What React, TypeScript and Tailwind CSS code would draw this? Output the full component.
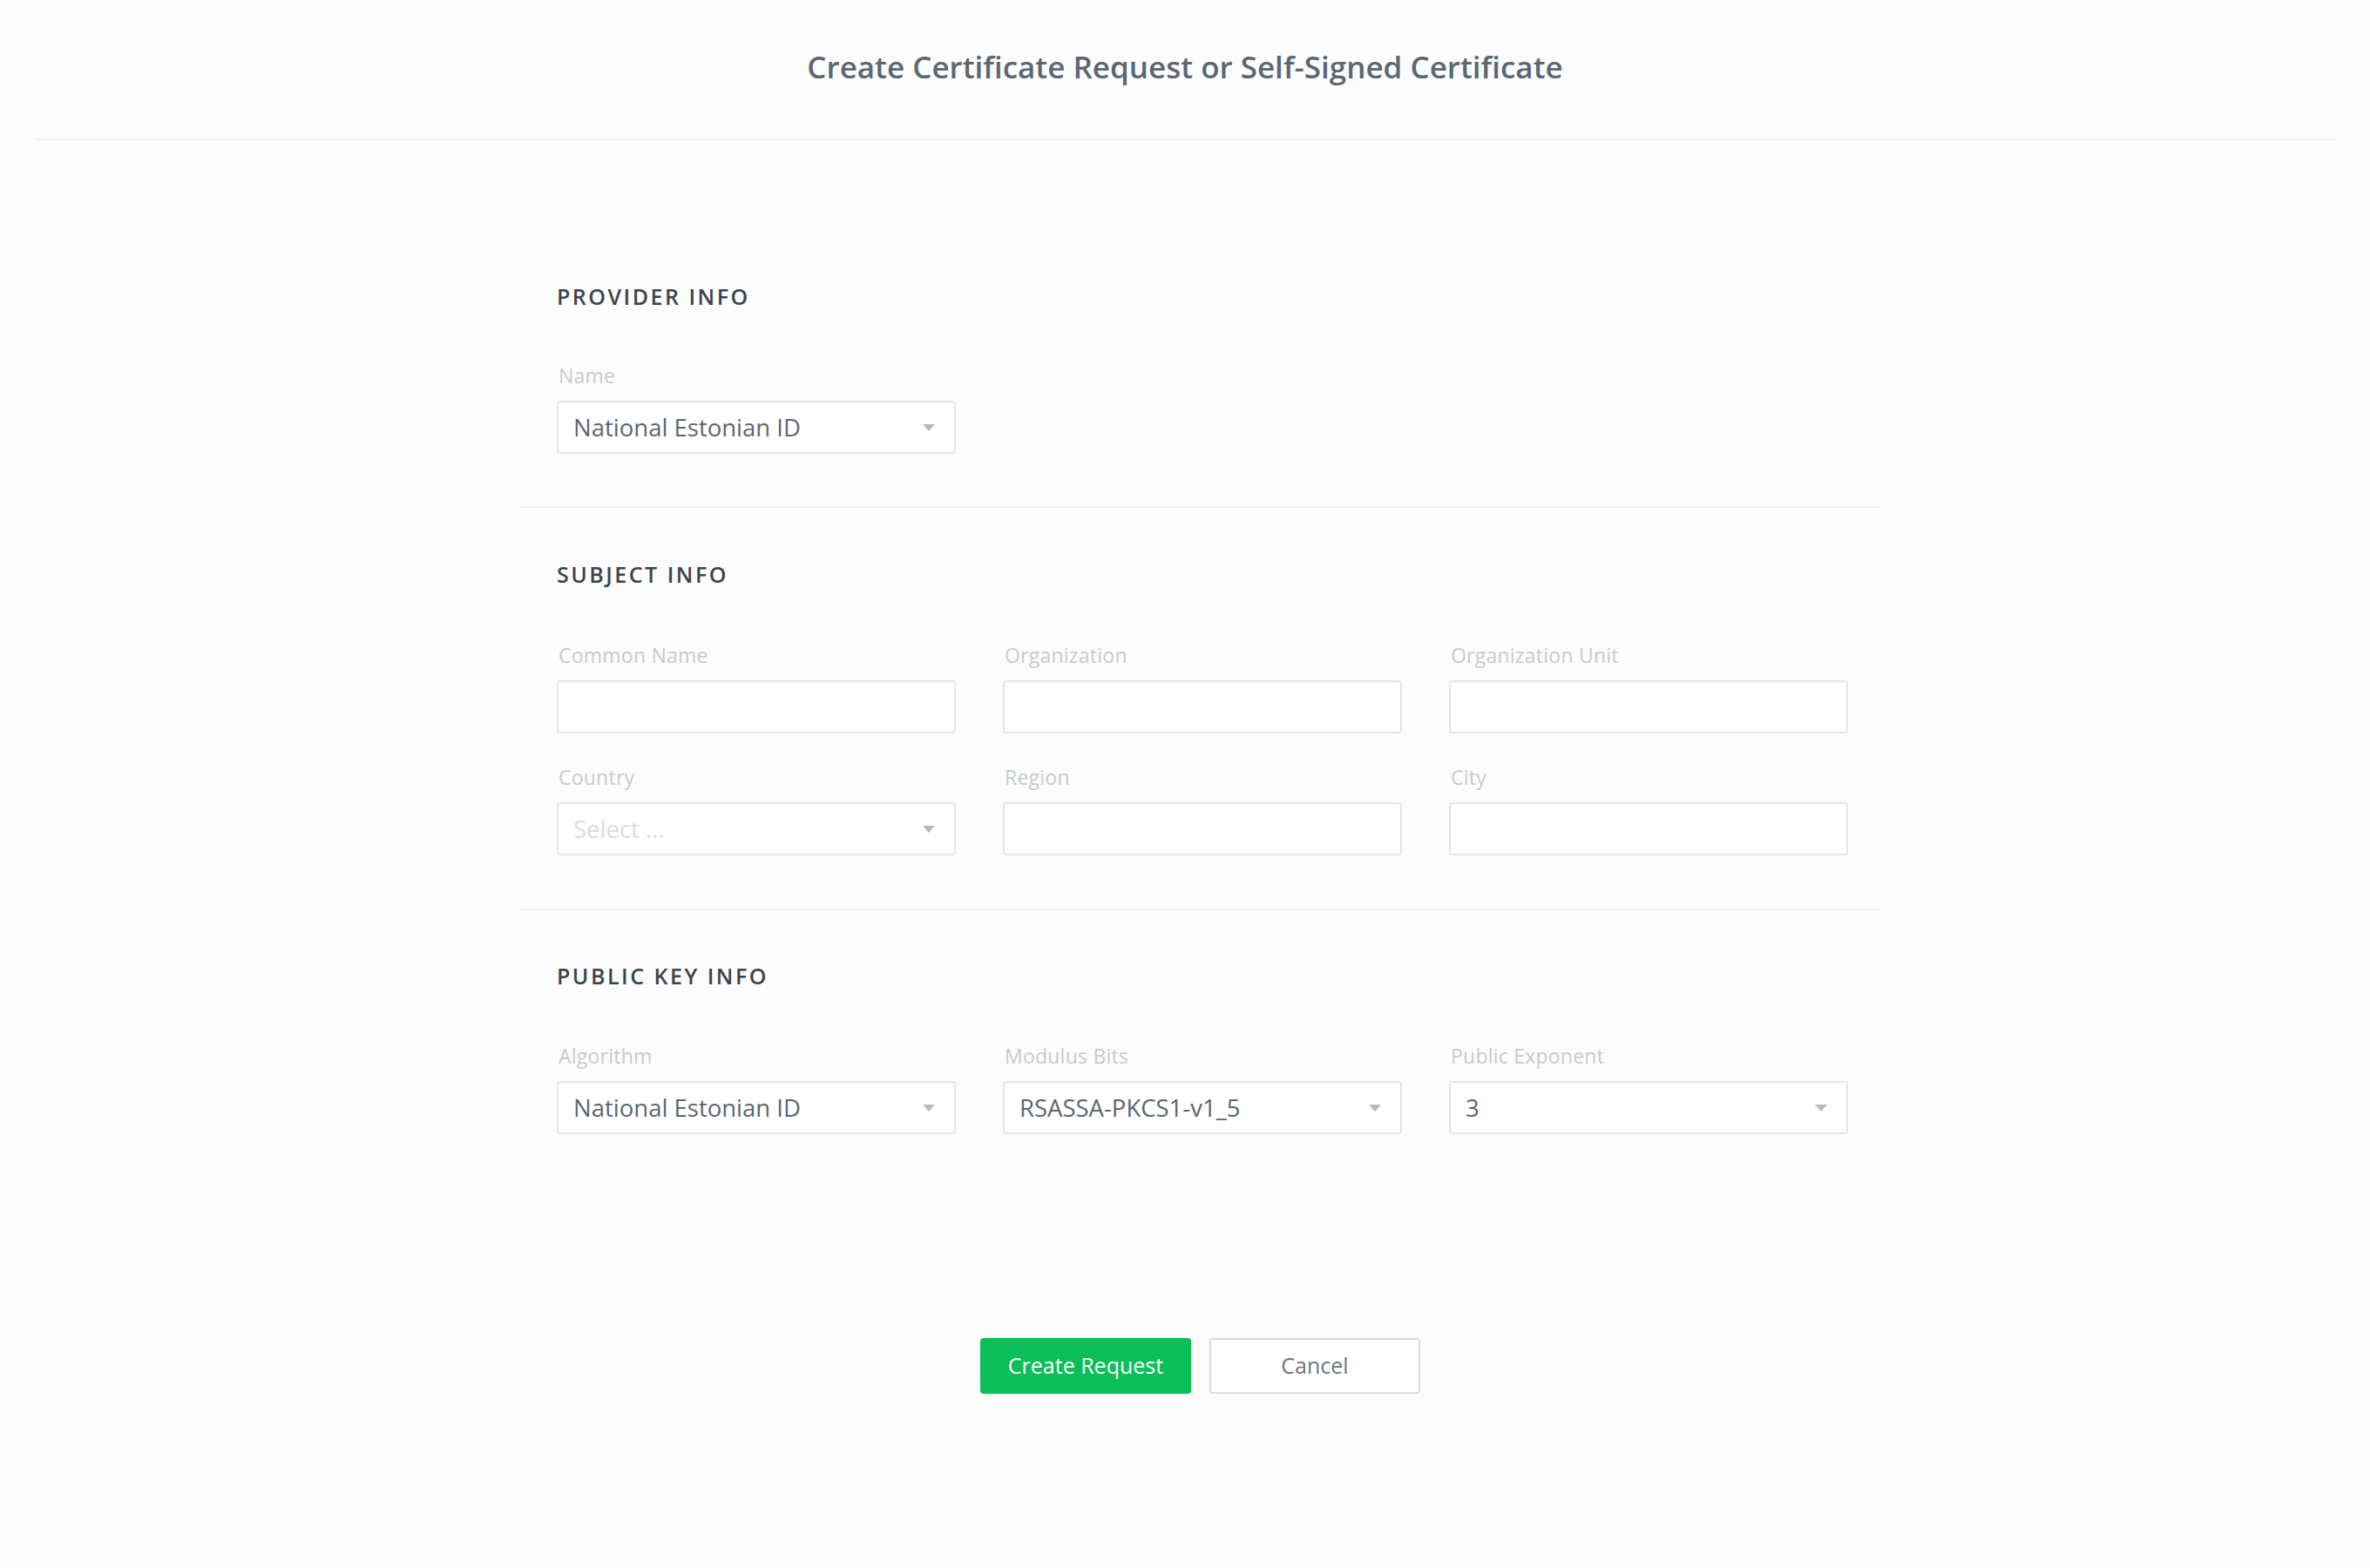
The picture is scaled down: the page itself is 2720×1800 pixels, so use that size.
function Caret() {
  return (
    <svg width="14" height="8" viewBox="0 0 14 8" className="shrink-0">
      <path d="M0 0H14L7 8Z" fill="#b4b9bd" />
    </svg>
  );
}

function Label({ children }: { children: string }) {
  return (
    <div className="text-[23px] leading-[22px] tracking-[0.01em] text-[#c7cbcf] ml-[2px]">{children}</div>
  );
}

function TextInput({ label }: { label: string }) {
  return (
    <div className="flex flex-col">
      <Label>{label}</Label>
      <div className="mt-[18px] h-[61px] rounded-[4px] border-2 border-[#e3e6ea] bg-white" />
    </div>
  );
}

function SelectInput({ label, value, placeholder }: { label: string; value?: string; placeholder?: string }) {
  return (
    <div className="flex flex-col">
      <Label>{label}</Label>
      <div className="mt-[18px] h-[61px] rounded-[4px] border-2 border-[#e3e6ea] bg-white flex items-center justify-between pl-[17px] pr-[22px]">
        {value ? (
          <span className="text-[27.5px] text-[#5b6671]">{value}</span>
        ) : (
          <span className="text-[27.5px] text-[#d9dcdf]">{placeholder}</span>
        )}
        <Caret />
      </div>
    </div>
  );
}

function SectionTitle({ children }: { children: string }) {
  return (
    <h2 className="text-[25px] leading-[24px] font-semibold tracking-[0.1em] text-[#3b444d]">{children}</h2>
  );
}

export default function App() {
  return (
    <div className="min-h-[1800px] bg-[#fcfcfc] font-['Open_Sans',sans-serif]">
      <header className="h-[159px] pb-[5px] flex items-center justify-center">
        <h1 className="text-[35px] font-semibold text-[#5b6772]">
          Create Certificate Request or Self-Signed Certificate
        </h1>
      </header>
      <div className="mx-[40px] h-[2px] bg-[#f1f1f1]" />

      <div className="pl-[35px]">
        <div className="mx-auto w-[1561px]">
          {/* provider */}
          <section className="pt-[167px] pb-[60px] pl-[42px] pr-[37px]">
            <SectionTitle>PROVIDER INFO</SectionTitle>
            <div className="mt-[68px] grid grid-cols-3 gap-x-[54px]">
              <SelectInput label="Name" value="National Estonian ID" />
            </div>
          </section>
          <div className="h-[2px] bg-[#f1f1f1]" />

          {/* subject */}
          <section className="pt-[64px] pb-[61px] pl-[42px] pr-[37px]">
            <SectionTitle>SUBJECT INFO</SectionTitle>
            <div className="mt-[70px] grid grid-cols-3 gap-x-[54px] gap-y-[39px]">
              <TextInput label="Common Name" />
              <TextInput label="Organization" />
              <TextInput label="Organization Unit" />
              <SelectInput label="Country" placeholder="Select ..." />
              <TextInput label="Region" />
              <TextInput label="City" />
            </div>
          </section>
          <div className="h-[2px] bg-[#f1f1f1]" />

          {/* public key */}
          <section className="pt-[63px] pl-[42px] pr-[37px]">
            <SectionTitle>PUBLIC KEY INFO</SectionTitle>
            <div className="mt-[69px] grid grid-cols-3 gap-x-[54px]">
              <SelectInput label="Algorithm" value="National Estonian ID" />
              <SelectInput label="Modulus Bits" value="RSASSA-PKCS1-v1_5" />
              <SelectInput label="Public Exponent" value="3" />
            </div>
          </section>

          <div className="mt-[234px] flex justify-center gap-[21px]">
            <button className="w-[242px] h-[64px] rounded-[4px] bg-[#0bbf58] text-white text-[25px]">
              Create Request
            </button>
            <button className="w-[242px] h-[64px] rounded-[4px] border-2 border-[#d8dce0] bg-white text-[#6b7580] text-[25px]">
              Cancel
            </button>
          </div>
        </div>
      </div>
    </div>
  );
}
